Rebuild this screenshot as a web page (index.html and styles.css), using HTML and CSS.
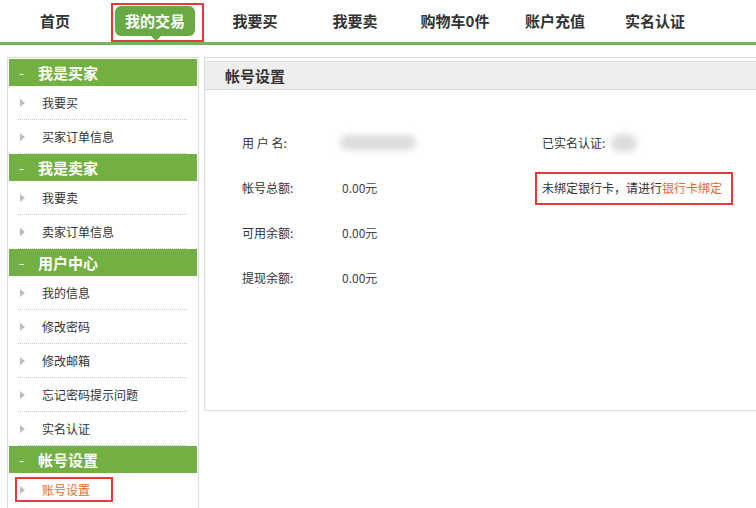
FILE: index.html
```html
<!DOCTYPE html>
<html lang="zh-CN">
<head>
    <meta charset="UTF-8">
    <meta name="viewport" content="width=device-width, initial-scale=1.0">
    <title>帐号设置</title>
    <link rel="stylesheet" href="styles.css">
</head>
<body>
    <div class="nav">
        <a class="nav-item" href="#">首页</a>
        <a class="nav-item active" href="#"><span class="pill">我的交易</span></a>
        <a class="nav-item" href="#">我要买</a>
        <a class="nav-item" href="#">我要卖</a>
        <a class="nav-item" href="#">购物车0件</a>
        <a class="nav-item" href="#">账户充值</a>
        <a class="nav-item" href="#">实名认证</a>
        <div class="mark mark-nav"></div>
    </div>

    <div class="page">
        <div class="side">
            <div class="side-title"><span class="minus">-</span>我是买家</div>
            <a class="side-link" href="#">我要买</a>
            <a class="side-link" href="#">买家订单信息</a>

            <div class="side-title"><span class="minus">-</span>我是卖家</div>
            <a class="side-link" href="#">我要卖</a>
            <a class="side-link" href="#">卖家订单信息</a>

            <div class="side-title"><span class="minus">-</span>用户中心</div>
            <a class="side-link" href="#">我的信息</a>
            <a class="side-link" href="#">修改密码</a>
            <a class="side-link" href="#">修改邮箱</a>
            <a class="side-link" href="#">忘记密码提示问题</a>
            <a class="side-link" href="#">实名认证</a>

            <div class="side-title"><span class="minus">-</span>帐号设置</div>
            <a class="side-link current" href="#">账号设置</a>
            <div class="mark mark-side"></div>
        </div>

        <div class="main">
            <div class="main-head">帐号设置</div>
            <div class="info">
                <div class="col">
                    <div class="row"><span class="label">用&nbsp;户&nbsp;名:</span><span class="blur blur-name"></span></div>
                    <div class="row"><span class="label">帐号总额:</span><span class="value">0.00元</span></div>
                    <div class="row"><span class="label">可用余额:</span><span class="value">0.00元</span></div>
                    <div class="row"><span class="label">提现余额:</span><span class="value">0.00元</span></div>
                </div>
                <div class="col">
                    <div class="row">已实名认证:<span class="blur blur-real"></span></div>
                    <div class="row bank">未绑定银行卡，请进行<a class="orange" href="#">银行卡绑定</a><div class="mark mark-bank"></div></div>
                </div>
            </div>
        </div>
    </div>
</body>
</html>
```

FILE: styles.css
```css
* {
    margin: 0;
    padding: 0;
    box-sizing: border-box;
}
body {
    font-family: "Noto Sans CJK SC", "Liberation Sans", sans-serif;
    color: #333;
    background: #fff;
    width: 756px;
    height: 508px;
    overflow: hidden;
}
a {
    text-decoration: none;
    color: inherit;
}
.nav {
    position: relative;
    display: flex;
    height: 45px;
    padding-left: 5px;
    border-bottom: 3px solid #78b158;
}
.nav-item {
    width: 100px;
    height: 42px;
    line-height: 42px;
    text-align: center;
    font-size: 15px;
    font-weight: bold;
    color: #333;
}
.nav-item.active {
    display: flex;
    justify-content: center;
    align-items: flex-start;
    padding-top: 6px;
}
.pill {
    position: relative;
    display: block;
    width: 80px;
    height: 30px;
    line-height: 30px;
    border-radius: 6px;
    background: #6aaa44;
    color: #fff;
}
.pill::after {
    content: "";
    position: absolute;
    left: 36px;
    bottom: -5px;
    border-left: 5px solid transparent;
    border-right: 5px solid transparent;
    border-top: 5px solid #6aaa44;
}
.mark {
    position: absolute;
    border: 2px solid #e43a3a;
}
.mark-nav {
    left: 111px;
    top: 3px;
    width: 93px;
    height: 39px;
}
.page {
    display: flex;
    padding: 12px 0 0 7px;
}
.side {
    position: relative;
    width: 192px;
    height: 460px;
    border: 1px solid #dcdcdc;
    border-bottom: none;
    padding: 1px;
    margin-right: 5px;
}
.side-title {
    height: 27px;
    line-height: 27px;
    background: #72b043;
    color: #fff;
    font-size: 15px;
    font-weight: bold;
}
.minus {
    display: inline-block;
    width: 29px;
    padding-left: 10px;
    font-weight: normal;
}
.side-link {
    position: relative;
    display: block;
    height: 34px;
    line-height: 33px;
    margin: 0 10px 0 9px;
    padding-left: 24px;
    font-size: 12px;
    color: #333;
    border-bottom: 1px dotted #c8c8c8;
}
.side-link::before {
    content: "";
    position: absolute;
    left: 2px;
    top: 13px;
    border-top: 4px solid transparent;
    border-bottom: 4px solid transparent;
    border-left: 5px solid #bcbcbc;
}
.side-link.current {
    color: #e26d1e;
    border-bottom: none;
}
.mark-side {
    left: 7px;
    top: 419px;
    width: 98px;
    height: 25px;
}
.main {
    flex: 1;
    height: 354px;
    border: 1px solid #dcdcdc;
    border-right: none;
}
.main-head {
    margin-top: 3px;
    height: 29px;
    line-height: 28px;
    padding-left: 20px;
    background: #eeeeee;
    border-top: 1px solid #e2e2e2;
    border-bottom: 1px solid #d4d4d4;
    font-size: 15px;
    font-weight: bold;
    color: #333;
}
.info {
    display: flex;
    padding: 30px 0 0 37px;
    font-size: 12px;
}
.col:first-child {
    width: 300px;
}
.row {
    position: relative;
    display: flex;
    align-items: center;
    height: 45px;
}
.label {
    width: 100px;
}
.value {
    color: #444;
}
.blur {
    display: inline-block;
    background: #dcdcdc;
    filter: blur(3px);
    border-radius: 9px;
}
.blur-name {
    width: 76px;
    height: 15px;
    margin-left: -2px;
}
.blur-real {
    width: 26px;
    height: 18px;
    margin-left: 6px;
}
.orange {
    color: #e8682c;
}
.mark-bank {
    left: -7px;
    top: 7px;
    width: 198px;
    height: 33px;
}
```
